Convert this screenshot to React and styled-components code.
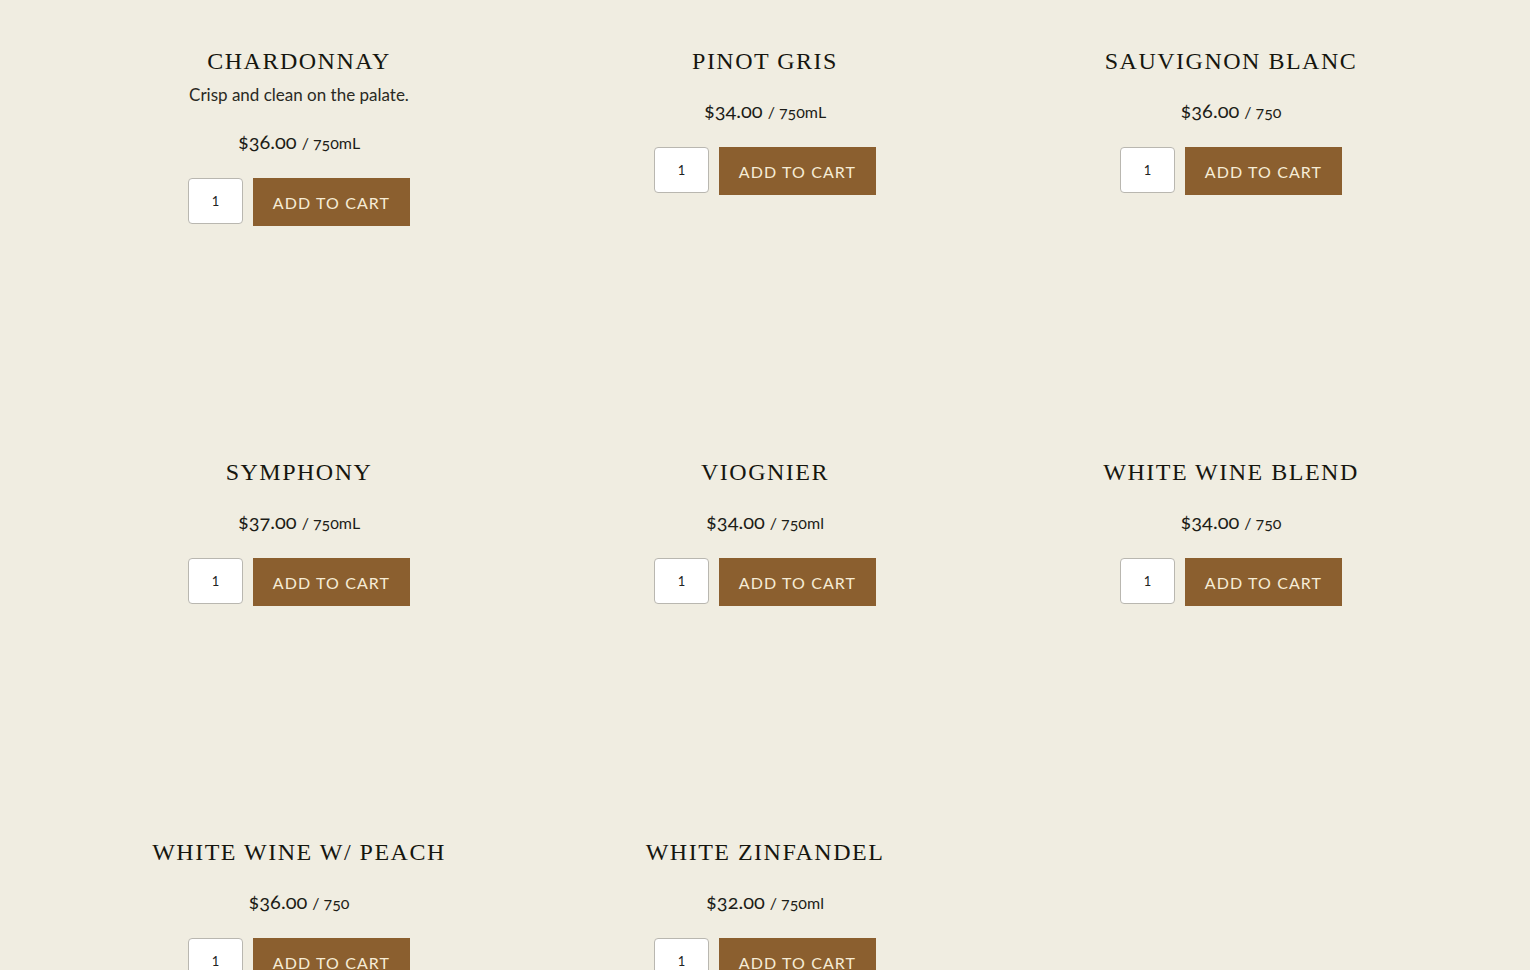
import React from 'react'
import styled, { createGlobalStyle } from 'styled-components'

const wines = [
  { name: 'Chardonnay', desc: 'Crisp and clean on the palate.', price: '36.00', size: '750mL' },
  { name: 'Pinot Gris', price: '34.00', size: '750mL' },
  { name: 'Sauvignon Blanc', price: '36.00', size: '750' },
  { name: 'Symphony', price: '37.00', size: '750mL' },
  { name: 'Viognier', price: '34.00', size: '750ml' },
  { name: 'White Wine Blend', price: '34.00', size: '750' },
  { name: 'White Wine w/ Peach', price: '36.00', size: '750' },
  { name: 'White Zinfandel', price: '32.00', size: '750ml' },
]

const GlobalStyle = createGlobalStyle`
  html, body {
    margin: 0;
    padding: 0;
    background: #f0ede1;
  }
  body {
    font-family: Lato, 'Open Sans', sans-serif;
    color: #222;
  }
`

const Page = styled.main`
  width: 1398px;
  margin: 0 auto;
  padding-top: 46px;
  display: grid;
  grid-template-columns: repeat(3, 1fr);
  row-gap: 231px;
  align-items: start;
`

const Card = styled.article`
  display: flex;
  flex-direction: column;
  align-items: center;
  text-align: center;
`

const Title = styled.h2`
  margin: 0;
  font-family: 'Liberation Serif', 'Times New Roman', serif;
  font-weight: 400;
  font-size: 24px;
  line-height: 31px;
  letter-spacing: 1.5px;
  text-transform: uppercase;
  color: #16160f;
`

const Desc = styled.p`
  margin: 6px 0 0;
  font-size: 17px;
  line-height: 24px;
  color: #2a2a24;
`

const Price = styled.div`
  margin-top: ${(props) => (props.$withDesc ? '21px' : '20px')};
  line-height: 27px;
  font-size: 20px;
  color: #1d1d18;
  font-variant-numeric: oldstyle-nums;

  small {
    font-size: 16px;
    margin-left: 5px;
  }
`

const BuyRow = styled.form`
  margin: 22px 0 0;
  display: flex;
  gap: 10px;
  align-items: flex-start;
`

const Qty = styled.input`
  box-sizing: border-box;
  width: 55px;
  height: 46px;
  border: 1px solid #b9b7b0;
  border-radius: 4px;
  background: #fff;
  text-align: center;
  font-family: Lato, sans-serif;
  font-size: 13px;
  color: #222;
  padding: 0;
`

const AddButton = styled.button`
  box-sizing: border-box;
  width: 157px;
  height: 48px;
  border: none;
  background: #8b5f2f;
  color: #f6ecd6;
  font-family: Lato, 'Open Sans', sans-serif;
  font-size: 16px;
  letter-spacing: 1.1px;
  text-transform: uppercase;
  cursor: pointer;
`

const Wine = ({ wine }) => (
  <Card>
    <Title>{wine.name}</Title>
    {wine.desc && <Desc>{wine.desc}</Desc>}
    <Price $withDesc={!!wine.desc}>
      ${wine.price}
      <small>/ {wine.size}</small>
    </Price>
    <BuyRow onSubmit={(e) => e.preventDefault()}>
      <Qty type="text" defaultValue="1" aria-label="Quantity" />
      <AddButton type="submit">Add to cart</AddButton>
    </BuyRow>
  </Card>
)

const App = () => (
  <>
    <GlobalStyle />
    <Page>
      {wines.map((wine) => (
        <Wine key={wine.name} wine={wine} />
      ))}
    </Page>
  </>
)

export default App
